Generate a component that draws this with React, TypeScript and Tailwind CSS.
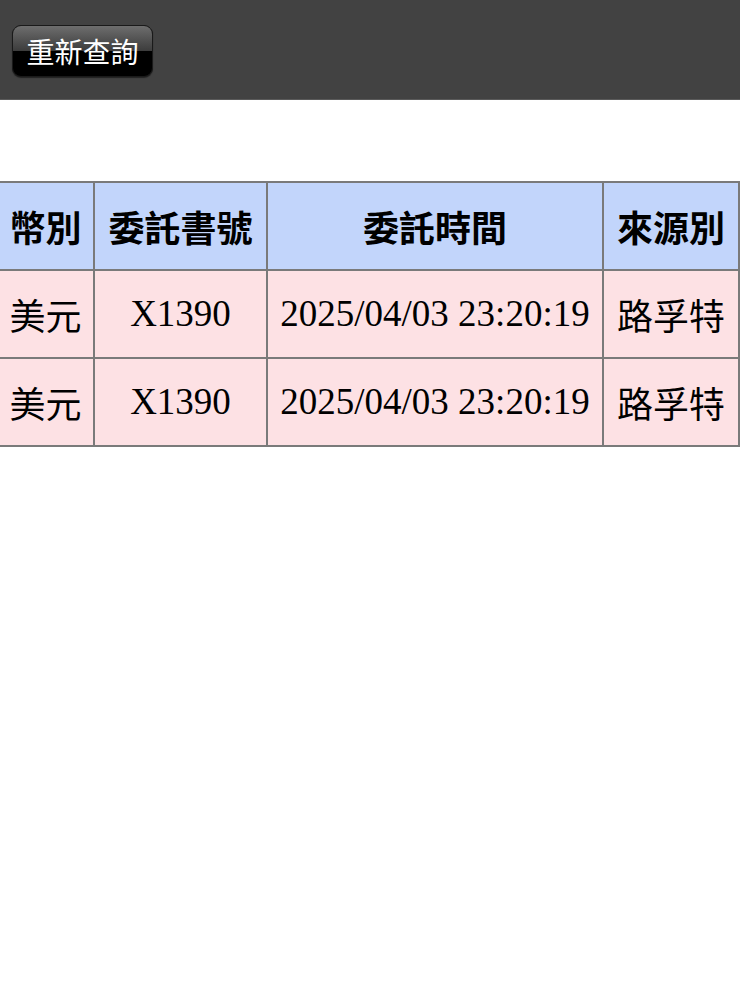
export default function App() {
  const rows = [
    { currency: "美元", no: "X1390", time: "2025/04/03 23:20:19", source: "路孚特" },
    { currency: "美元", no: "X1390", time: "2025/04/03 23:20:19", source: "路孚特" },
  ];

  return (
    <div className="min-h-[1008px] w-[740px] overflow-hidden bg-white">
      {/* Top toolbar */}
      <div className="flex h-[100px] items-start border-b border-[#5a5a5a] bg-[#424242] pl-[12px] pt-[25px]">
        <button className="relative h-[52px] w-[141px] overflow-hidden rounded-[9px] border border-[#1a1a1a] bg-black font-['Noto_Sans_CJK_TC',sans-serif] text-[28px] leading-[48px] text-white shadow-[0_1px_1px_rgba(0,0,0,0.5)]">
          <span className="absolute inset-x-0 top-0 h-1/2 bg-gradient-to-b from-[#6e6e6e] to-[#3c3c3c]" />
          <span className="relative">重新查詢</span>
        </button>
      </div>

      {/* Result table */}
      <div className="mt-[81px] ml-[-4px]">
        <table className="w-[742px] table-fixed border-collapse border-2 border-[#7a7a7a] font-['Liberation_Serif','Noto_Sans_CJK_TC',serif] text-[37px] text-black">
          <colgroup>
            <col className="w-[97px]" />
            <col className="w-[173px]" />
            <col className="w-[336px]" />
            <col className="w-[136px]" />
          </colgroup>
          <thead>
            <tr className="bg-[#c2d5fb]">
              {["幣別", "委託書號", "委託時間", "來源別"].map((h) => (
                <th
                  key={h}
                  className="h-[88px] border-2 border-[#7a7a7a] p-0 text-center font-['Noto_Sans_CJK_TC',sans-serif] text-[36px] font-bold"
                >
                  {h}
                </th>
              ))}
            </tr>
          </thead>
          <tbody>
            {rows.map((r, i) => (
              <tr key={i} className="bg-[#fde1e4]">
                <td className="h-[88px] border-2 border-[#7a7a7a] p-0 text-center font-['Noto_Sans_CJK_TC',sans-serif] text-[36px]">
                  {r.currency}
                </td>
                <td className="h-[88px] border-2 border-[#7a7a7a] p-0 text-center">{r.no}</td>
                <td className="h-[88px] border-2 border-[#7a7a7a] p-0 text-center whitespace-nowrap">{r.time}</td>
                <td className="h-[88px] border-2 border-[#7a7a7a] p-0 text-center font-['Noto_Sans_CJK_TC',sans-serif] text-[36px]">
                  {r.source}
                </td>
              </tr>
            ))}
          </tbody>
        </table>
      </div>
    </div>
  );
}
